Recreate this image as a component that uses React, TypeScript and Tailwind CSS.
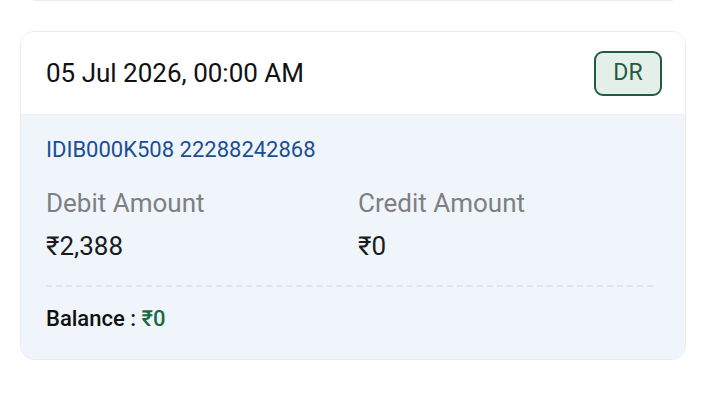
const font = { fontFamily: "Roboto, 'Noto Sans', 'DejaVu Sans', sans-serif" };

export default function App() {
  return (
    <div className="w-[706px] h-[393px] bg-white" style={font}>
      <div className="mx-[33px] h-px bg-[#ededed]" />
      <div className="mx-[20px] mt-[30px] rounded-[14px] border border-[#e9ecef] overflow-hidden">
        <div className="h-[83px] bg-white flex items-center justify-between pl-[25px] pr-[23px] border-b border-[#eef0f3]">
          <span className="text-[26px] leading-[30px] text-[#111]">
            05 Jul 2026, 00:00 AM
          </span>
          <span className="w-[68px] h-[45px] flex items-center justify-center rounded-[9px] border-2 border-[#1f5c40] bg-[#e5efe9] text-[23px] text-[#1f5c40]">
            DR
          </span>
        </div>
        <div className="bg-[#f0f5fc] px-[25px] pt-[21px] pb-[27px]">
          <div className="text-[22px] leading-[28px] text-[#1a4f95]">
            IDIB000K508 22288242868
          </div>
          <div className="mt-[24px] flex">
            <div className="w-[312px]">
              <div className="text-[26px] leading-[30px] text-[#7d7f82]">Debit Amount</div>
              <div className="mt-[14px] text-[26px] leading-[28px] text-[#1a1a1a]">₹2,388</div>
            </div>
            <div>
              <div className="text-[26px] leading-[30px] text-[#7d7f82]">Credit Amount</div>
              <div className="mt-[14px] text-[26px] leading-[28px] text-[#1a1a1a]">₹0</div>
            </div>
          </div>
          <div className="mt-[25px] mr-[7px] border-t-2 border-dashed border-[#e2e6ec]" />
          <div className="mt-[19px] text-[22px] leading-[26px] font-medium text-[#111]">
            Balance : <span className="text-[#1b6b43]">₹0</span>
          </div>
        </div>
      </div>
    </div>
  );
}
